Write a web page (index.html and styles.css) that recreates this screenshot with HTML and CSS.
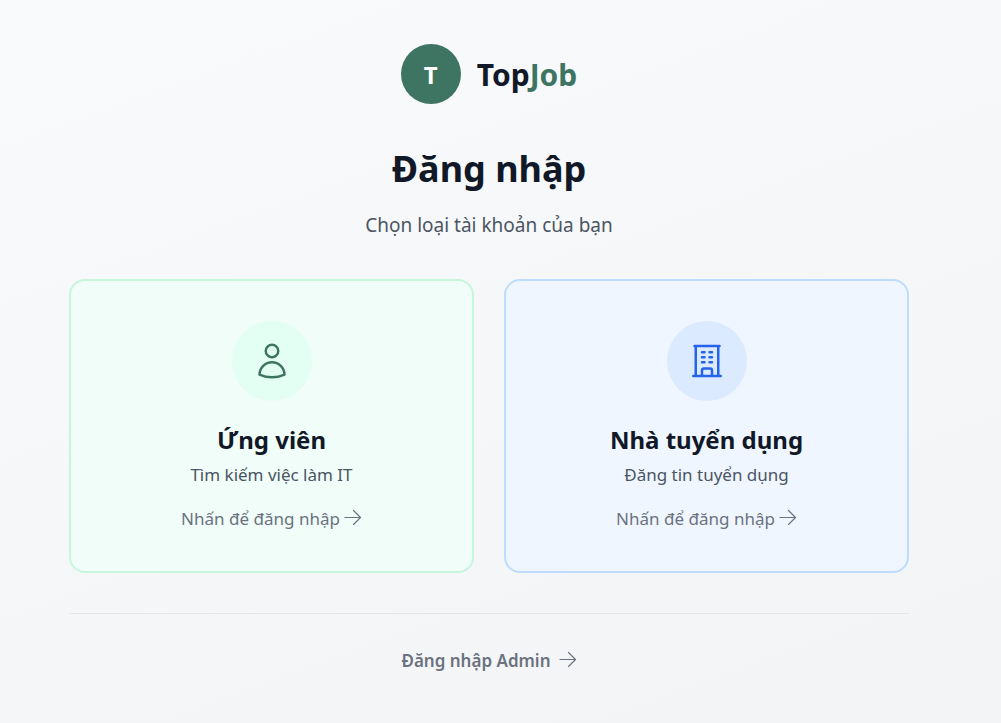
FILE: index.html
```html
<!DOCTYPE html>
<html lang="vi">
<head>
<meta charset="utf-8">
<meta name="viewport" content="width=device-width, initial-scale=1">
<title>TopJob</title>
<link rel="stylesheet" href="styles.css">
</head>
<body>
<main class="page">
  <header class="header">
    <a class="brand" href="#">
      <span class="brand-mark">T</span>
      <span class="brand-name">Top<span class="brand-accent">Job</span></span>
    </a>
    <h1 class="title">Đăng nhập</h1>
    <p class="subtitle">Chọn loại tài khoản của bạn</p>
  </header>

  <div class="cards">
    <a class="card card-candidate" href="#">
      <span class="card-icon">
        <svg class="icon" viewBox="0 0 24 24" aria-hidden="true"><path d="M15.75 6a3.75 3.75 0 1 1-7.5 0 3.75 3.75 0 0 1 7.5 0ZM4.501 20.118a7.5 7.5 0 0 1 14.998 0A17.933 17.933 0 0 1 12 21.75c-2.676 0-5.216-.584-7.499-1.632Z"/></svg>
      </span>
      <h2 class="card-title">Ứng viên</h2>
      <p class="card-text">Tìm kiếm việc làm IT</p>
      <span class="card-action">Nhấn để đăng nhập
        <svg class="arrow" viewBox="0 0 18 16" aria-hidden="true"><path d="M1 8.500h15.500M9.500 1.500l7 7-7 7"/></svg>
      </span>
    </a>
    <a class="card card-employer" href="#">
      <span class="card-icon">
        <svg class="icon" viewBox="0 0 24 24" aria-hidden="true"><path d="M3.750 21h16.500M4.500 3h15M5.250 3v18m13.500-18v18M9 6.750h1.500m-1.500 3h1.500m-1.500 3h1.500m3-6H15m-1.500 3H15m-1.500 3H15M9 21v-3.375c0-.621.504-1.125 1.125-1.125h3.750c.621 0 1.125.504 1.125 1.125V21"/></svg>
      </span>
      <h2 class="card-title">Nhà tuyển dụng</h2>
      <p class="card-text">Đăng tin tuyển dụng</p>
      <span class="card-action">Nhấn để đăng nhập
        <svg class="arrow" viewBox="0 0 18 16" aria-hidden="true"><path d="M1 8.500h15.500M9.500 1.500l7 7-7 7"/></svg>
      </span>
    </a>
  </div>

  <footer class="footer">
    <a class="admin-link" href="#">Đăng nhập Admin
      <svg class="arrow" viewBox="0 0 18 16" aria-hidden="true"><path d="M1 8.500h15.500M9.500 1.500l7 7-7 7"/></svg>
    </a>
  </footer>
</main>
</body>
</html>
```
FILE: styles.css
```css
* {
  box-sizing: border-box;
  margin: 0;
}

body {
  min-height: 100vh;
  padding: 44px 92px 40px 69px;
  font-family: "Noto Sans", "Open Sans", sans-serif;
  color: #111827;
  background: linear-gradient(160deg, #f9fafc, #f3f4f6);
}

a {
  color: inherit;
  text-decoration: none;
}

.page {
  max-width: 840px;
  margin: 0 auto;
}

.header {
  display: flex;
  flex-direction: column;
  align-items: center;
  text-align: center;
}

.brand {
  display: flex;
  align-items: center;
  gap: 16px;
}

.brand-mark {
  display: grid;
  place-items: center;
  width: 60px;
  height: 60px;
  border-radius: 50%;
  color: #fff;
  background: #3d7562;
  font-size: 24px;
  font-weight: 700;
}

.brand-name {
  font-size: 30px;
  font-weight: 700;
}

.brand-accent {
  color: #3d7562;
}

.title {
  margin-top: 40px;
  font-size: 36px;
  line-height: 50px;
  font-weight: 700;
}

.subtitle {
  margin-top: 16px;
  font-size: 19px;
  line-height: 30px;
  color: #4b5563;
}

.cards {
  display: grid;
  grid-template-columns: 1fr 1fr;
  gap: 30px;
  margin-top: 39px;
}

.card {
  display: flex;
  flex-direction: column;
  align-items: center;
  padding: 40px 24px;
  border: 2px solid;
  border-radius: 16px;
  text-align: center;
}

.card-candidate {
  background: #f0fdf9;
  border-color: #c6f6de;
}

.card-employer {
  background: #eff6ff;
  border-color: #bfdbfe;
}

.card-icon {
  display: grid;
  place-items: center;
  width: 80px;
  height: 80px;
  border-radius: 50%;
}

.card-candidate .card-icon {
  color: #3d7562;
  background: #e3fef3;
}

.card-employer .card-icon {
  color: #2563eb;
  background: #dbeafe;
}

.icon,
.arrow {
  fill: none;
  stroke: currentColor;
  stroke-linecap: round;
  stroke-linejoin: round;
}

.icon {
  width: 40px;
  height: 40px;
  stroke-width: 1.5;
}

.card-title {
  margin-top: 20px;
  font-size: 24px;
  line-height: 38px;
  font-weight: 700;
}

.card-text {
  font-size: 17px;
  line-height: 32px;
  color: #4b5563;
}

.card-action {
  display: flex;
  gap: 4px;
  margin-top: 16px;
  font-size: 17px;
  line-height: 24px;
  color: #6b7280;
}

.arrow {
  width: 18px;
  height: 16px;
  margin-top: 2px;
  stroke-width: 1.2;
}

.footer {
  display: flex;
  justify-content: center;
  margin-top: 40px;
  padding-top: 35px;
  border-top: 1px solid #e5e7eb;
}

.admin-link {
  display: flex;
  gap: 8px;
  font-size: 17px;
  line-height: 24px;
  font-weight: 600;
  color: #6b7280;
}
```
